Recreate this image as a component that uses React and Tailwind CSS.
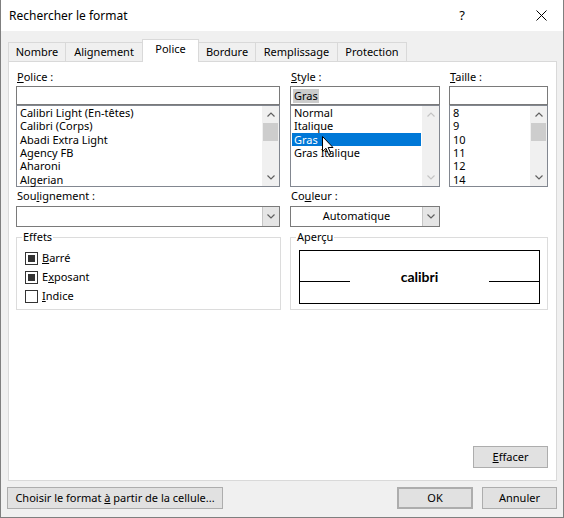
import React from 'react';

const font = { fontFamily: '"Noto Sans", "Open Sans", sans-serif' };

function Chevron({ up, color = '#606060' }) {
  return (
    <svg width="8" height="5" viewBox="0 0 8 5" fill="none" stroke={color} strokeWidth="1.2">
      {up ? <path d="M0.5 4.5 L4 1 L7.5 4.5" /> : <path d="M0.5 0.5 L4 4 L7.5 0.5" />}
    </svg>
  );
}

function ScrollBar({ disabled }) {
  const c = disabled ? '#c4c4c4' : '#606060';
  return (
    <div className="w-[17px] h-full bg-[#f0f0f0] flex flex-col">
      <div className="h-[17px] flex items-center justify-center">
        <Chevron up color={c} />
      </div>
      <div className="flex-1">
        {!disabled && <div className="mx-[1px] h-[18px] bg-[#cdcdcd]" />}
      </div>
      <div className="h-[17px] flex items-center justify-center">
        <Chevron color={c} />
      </div>
    </div>
  );
}

function ListBox({ items, selected, disabledScroll, children }) {
  return (
    <div className="relative h-[82px] border border-[#828790] bg-white flex">
      <div className="flex-1">
        {items.map((it) => (
          <div
            key={it}
            className={`h-[13.33px] mx-[1px] px-[2px] whitespace-nowrap leading-[13.33px] ${
              it === selected ? 'bg-[#0078d7] text-white' : 'text-black'
            }`}
          >
            {it}
          </div>
        ))}
      </div>
      <ScrollBar disabled={disabledScroll} />
      {children}
    </div>
  );
}

function Label({ children }) {
  return <div className="h-[18px] flex items-center pl-[1px]">{children}</div>;
}

function Combo({ text }) {
  return (
    <div className="h-[21px] border border-[#7a7a7a] bg-white flex">
      <div className="flex-1 flex items-center justify-center">{text}</div>
      <div className="w-[17px] bg-[#e5e5e5] border-l border-[#c6c6c6] flex items-center justify-center">
        <Chevron />
      </div>
    </div>
  );
}

function CheckBox({ checked, children }) {
  return (
    <div className="h-[19px] flex items-center">
      <div className="w-[13px] h-[13px] border border-[#333333] bg-white flex items-center justify-center">
        {checked && <div className="w-[7px] h-[7px] bg-[#333333]" />}
      </div>
      <span className="ml-[4px]">{children}</span>
    </div>
  );
}

function Tab({ label, active, width }) {
  return (
    <div
      className={`-ml-px first:ml-0 border border-b-0 border-[#d9d9d9] flex items-center justify-center ${
        active ? 'relative z-10 h-[23px] -mb-px bg-white pb-[3px]' : 'h-[19px] bg-[#f0f0f0]'
      } ${width}`}
    >
      {label}
    </div>
  );
}

function Button({ children, className = '' }) {
  return (
    <div
      className={`h-[22px] bg-[#e1e1e1] border border-[#adadad] flex items-center justify-center ${className}`}
    >
      {children}
    </div>
  );
}

export default function App() {
  return (
    <div
      className="w-[564px] h-[518px] bg-[#f0f0f0] border-x border-b border-[#7f7f7f] flex flex-col text-[11px] text-black overflow-hidden"
      style={font}
    >
      {/* Title bar */}
      <div className="h-[31px] bg-white flex items-center pl-[8px]">
        <span className="text-[12px]">Rechercher le format</span>
        <span className="ml-auto mr-[71px] text-[13px]">?</span>
        <svg className="mr-[16px]" width="11" height="11" viewBox="0 0 11 11" stroke="#000" strokeWidth="1">
          <path d="M0.5 0.5 L10.5 10.5 M10.5 0.5 L0.5 10.5" />
        </svg>
      </div>

      {/* Tabs */}
      <div className="h-[30px] flex items-end pl-[7px]">
        <Tab label="Nombre" width="w-[58px]" />
        <Tab label="Alignement" width="w-[78px]" />
        <Tab label="Police" width="w-[57px]" active />
        <Tab label="Bordure" width="w-[58px]" />
        <Tab label="Remplissage" width="w-[83px]" />
        <Tab label="Protection" width="w-[70px]" />
      </div>

      {/* Panel */}
      <div className="ml-[7px] w-[549px] h-[420px] border border-[#d9d9d9] bg-white flex flex-col pl-[7px] pr-[8px] pt-[6px] pb-[12px]">
        <div className="flex">
          <div className="w-[264px]">
            <Label>
              <span><u>P</u>olice :</span>
            </Label>
            <div className="h-[19px] border border-[#7a7a7a] bg-white" />
            <ListBox
              items={['Calibri Light (En-têtes)', 'Calibri (Corps)', 'Abadi Extra Light', 'Agency FB', 'Aharoni', 'Algerian']}
            />
          </div>
          <div className="w-[150px] ml-[10px]">
            <Label>
              <span><u>S</u>tyle :</span>
            </Label>
            <div className="h-[19px] border border-[#7a7a7a] bg-white flex items-center pl-[2px]">
              <span className="bg-[#cccccc] px-[1px] leading-[14px]">Gras</span>
            </div>
            <ListBox items={['Normal', 'Italique', 'Gras', 'Gras Italique']} selected="Gras" disabledScroll>
              <svg
                className="absolute left-[31px] top-[30px]"
                width="13"
                height="20"
                viewBox="0 0 13 20"
              >
                <path
                  d="M0.5 0.5 L0.5 15.5 L4 12.3 L6.6 18.5 L8.8 17.6 L6.2 11.5 L11 11.5 Z"
                  fill="#fff"
                  stroke="#000"
                  strokeWidth="1"
                  strokeLinejoin="round"
                />
              </svg>
            </ListBox>
          </div>
          <div className="w-[99px] ml-[9px]">
            <Label>
              <span><u>T</u>aille :</span>
            </Label>
            <div className="h-[19px] border border-[#7a7a7a] bg-white" />
            <ListBox items={['8', '9', '10', '11', '12', '14']} />
          </div>
        </div>

        <div className="flex">
          <div className="w-[264px]">
            <div className="h-[19px] flex items-center pl-[1px]">
              <span>Sou<u>l</u>ignement :</span>
            </div>
            <Combo text="" />
          </div>
          <div className="w-[150px] ml-[10px]">
            <div className="h-[19px] flex items-center pl-[1px]">
              <span>Co<u>u</u>leur :</span>
            </div>
            <Combo text="Automatique" />
          </div>
        </div>

        <div className="flex mt-[2px]">
          <fieldset className="w-[265px] h-[81px] border border-[#dcdcdc] pl-[8px]">
            <legend className="ml-[-3px] px-[1px] leading-[16px]">Effets</legend>
            <div className="pt-[4px] flex flex-col">
              <CheckBox checked><u>B</u>arré</CheckBox>
              <CheckBox checked>E<u>x</u>posant</CheckBox>
              <CheckBox><u>I</u>ndice</CheckBox>
            </div>
          </fieldset>
          <fieldset className="w-[258px] h-[81px] border border-[#dcdcdc] ml-[9px] pl-[8px]">
            <legend className="ml-[-3px] px-[1px] leading-[16px]">Aperçu</legend>
            <div className="mt-[5px] w-[241px] h-[54px] border border-black">
              <div className="mt-[18px] flex items-baseline">
                <div className="w-[50px] h-[1px] bg-black" />
                <div
                  className="flex-1 text-center text-[14px] font-bold leading-[16px]"
                  style={{ fontFamily: 'Lato, "Noto Sans", sans-serif' }}
                >
                  calibri
                </div>
                <div className="w-[50px] h-[1px] bg-black" />
              </div>
            </div>
          </fieldset>
        </div>

        <div className="mt-auto flex justify-end">
          <Button className="w-[75px]">
            <span><u>E</u>ffacer</span>
          </Button>
        </div>
      </div>

      {/* Bottom buttons */}
      <div className="mt-[6px] flex pl-[6px] pr-[6px]">
        <Button className="w-[216px]">
          <span>Choisir le format <u>à</u> partir de la cellule...</span>
        </Button>
        <Button className="ml-auto w-[76px] border-2 border-[#0078d7]">OK</Button>
        <Button className="ml-[9px] w-[75px]">Annuler</Button>
      </div>
    </div>
  );
}
